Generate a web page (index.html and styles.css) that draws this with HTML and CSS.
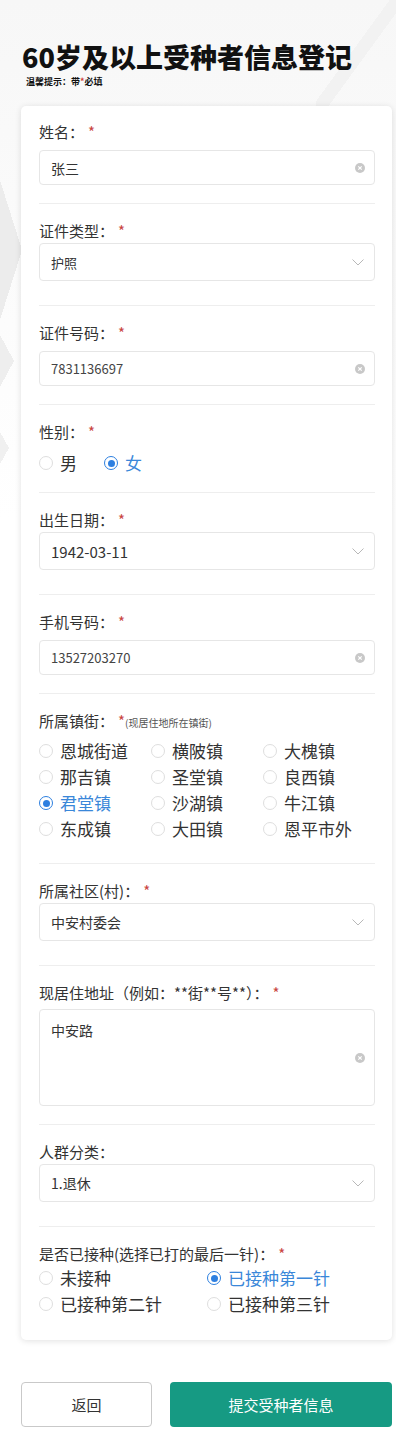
FILE: index.html
```html
<!DOCTYPE html>
<html lang="zh-CN">
<head>
<meta charset="utf-8">
<title>60岁及以上受种者信息登记</title>
<link rel="stylesheet" href="styles.css">
</head>
<body>
<div class="page">
  <h1 class="title">60岁及以上受种者信息登记</h1>
  <p class="tip">温馨提示：带<span class="tip-star">*</span>必填</p>

  <form class="card">
    <div class="field field-first">
      <div class="label">姓名：<span class="star">*</span></div>
      <div class="input input-text"><span class="value">张三</span>
        <svg class="clear" viewBox="0 0 10 10"><circle cx="5" cy="5" r="5"/><path d="M3.3 3.3L6.7 6.7M6.7 3.3L3.3 6.7"/></svg>
      </div>
    </div>

    <div class="field field-select">
      <div class="label">证件类型：<span class="star">*</span></div>
      <div class="input input-select"><span class="value value-sm">护照</span>
        <svg class="chev" viewBox="0 0 12 7"><path d="M0.5 0.5L6 6L11.5 0.5"/></svg>
      </div>
    </div>

    <div class="field">
      <div class="label">证件号码：<span class="star">*</span></div>
      <div class="input input-text"><span class="value value-num">7831136697</span>
        <svg class="clear" viewBox="0 0 10 10"><circle cx="5" cy="5" r="5"/><path d="M3.3 3.3L6.7 6.7M6.7 3.3L3.3 6.7"/></svg>
      </div>
    </div>

    <div class="field field-gender">
      <div class="label">性别：<span class="star">*</span></div>
      <div class="gender">
        <label class="radio"><span class="dot"></span><span class="rtext">男</span></label>
        <label class="radio checked"><span class="dot"></span><span class="rtext">女</span></label>
      </div>
    </div>

    <div class="field field-select">
      <div class="label">出生日期：<span class="star">*</span></div>
      <div class="input input-select"><span class="value value-date">1942-03-11</span>
        <svg class="chev" viewBox="0 0 12 7"><path d="M0.5 0.5L6 6L11.5 0.5"/></svg>
      </div>
    </div>

    <div class="field">
      <div class="label">手机号码：<span class="star">*</span></div>
      <div class="input input-text"><span class="value value-num">13527203270</span>
        <svg class="clear" viewBox="0 0 10 10"><circle cx="5" cy="5" r="5"/><path d="M3.3 3.3L6.7 6.7M6.7 3.3L3.3 6.7"/></svg>
      </div>
    </div>

    <div class="field field-town">
      <div class="label">所属镇街：<span class="star">*</span><span class="hint">(现居住地所在镇街)</span></div>
      <div class="grid3">
        <label class="radio"><span class="dot"></span><span class="rtext">恩城街道</span></label>
        <label class="radio"><span class="dot"></span><span class="rtext">横陂镇</span></label>
        <label class="radio"><span class="dot"></span><span class="rtext">大槐镇</span></label>
        <label class="radio"><span class="dot"></span><span class="rtext">那吉镇</span></label>
        <label class="radio"><span class="dot"></span><span class="rtext">圣堂镇</span></label>
        <label class="radio"><span class="dot"></span><span class="rtext">良西镇</span></label>
        <label class="radio checked"><span class="dot"></span><span class="rtext">君堂镇</span></label>
        <label class="radio"><span class="dot"></span><span class="rtext">沙湖镇</span></label>
        <label class="radio"><span class="dot"></span><span class="rtext">牛江镇</span></label>
        <label class="radio"><span class="dot"></span><span class="rtext">东成镇</span></label>
        <label class="radio"><span class="dot"></span><span class="rtext">大田镇</span></label>
        <label class="radio"><span class="dot"></span><span class="rtext">恩平市外</span></label>
      </div>
    </div>

    <div class="field field-select">
      <div class="label">所属社区(村)：<span class="star">*</span></div>
      <div class="input input-select"><span class="value">中安村委会</span>
        <svg class="chev" viewBox="0 0 12 7"><path d="M0.5 0.5L6 6L11.5 0.5"/></svg>
      </div>
    </div>

    <div class="field field-area">
      <div class="label">现居住地址（例如：**街**号**）：<span class="star">*</span></div>
      <div class="textarea"><span class="value">中安路</span>
        <svg class="clear" viewBox="0 0 10 10"><circle cx="5" cy="5" r="5"/><path d="M3.3 3.3L6.7 6.7M6.7 3.3L3.3 6.7"/></svg>
      </div>
    </div>

    <div class="field field-select">
      <div class="label">人群分类：</div>
      <div class="input input-select"><span class="value">1.退休</span>
        <svg class="chev" viewBox="0 0 12 7"><path d="M0.5 0.5L6 6L11.5 0.5"/></svg>
      </div>
    </div>

    <div class="field field-last">
      <div class="label">是否已接种(选择已打的最后一针)：<span class="star">*</span></div>
      <div class="grid2">
        <label class="radio"><span class="dot"></span><span class="rtext">未接种</span></label>
        <label class="radio checked"><span class="dot"></span><span class="rtext">已接种第一针</span></label>
        <label class="radio"><span class="dot"></span><span class="rtext">已接种第二针</span></label>
        <label class="radio"><span class="dot"></span><span class="rtext">已接种第三针</span></label>
      </div>
    </div>
  </form>

  <div class="actions">
    <button class="btn btn-back" type="button">返回</button>
    <button class="btn btn-submit" type="button">提交受种者信息</button>
  </div>
</div>
</body>
</html>
```

FILE: styles.css
```css
html { background: #fff; }

body {
  margin: 0;
  font-family: "Noto Sans CJK SC", "Noto Sans", sans-serif;
  color: #333;
  background-color: #fff;
  background-image:
    linear-gradient(to bottom left, transparent 50%, #ececec 50%),
    linear-gradient(to top left, transparent 50%, #ececec 50%),
    linear-gradient(to bottom left, transparent 50%, #eeeeee 50%),
    linear-gradient(to top left, transparent 50%, #eeeeee 50%),
    linear-gradient(to bottom left, transparent 50%, #f0f0f0 50%),
    linear-gradient(to top left, transparent 50%, #f0f0f0 50%),
    linear-gradient(to bottom right, transparent 46%, #f2f2f2 46%, #f2f2f2 56%, transparent 56%),
    linear-gradient(to bottom, #f7f7f7, #ffffff 520px);
  background-size:
    22px 70px, 22px 70px,
    14px 26px, 14px 26px,
    9px 16px, 9px 16px,
    80px 110px,
    100% 520px;
  background-position:
    0 180px, 0 250px,
    0 335px, 0 361px,
    0 432px, 0 448px,
    316px 0,
    0 0;
  background-repeat: no-repeat;
}

.page {
  padding: 41px 4px 12px 21px;
}

.title {
  margin: 0 0 0 1px;
  font-size: 27px;
  line-height: 32px;
  font-weight: 900;
  color: #111;
  letter-spacing: 0;
}

.tip {
  margin: 3px 0 19px 5px;
  font-size: 9px;
  line-height: 11px;
  font-weight: 700;
  color: #111;
  white-space: nowrap;
}

.tip-star { color: #d0403a; }

.card {
  display: block;
  margin: 0;
  background: #fff;
  border-radius: 5px;
  box-shadow: 0 1px 6px rgba(0, 0, 0, 0.12);
  padding: 0 17px 0 18px;
}

.field {
  padding: 17px 0 18px;
  border-bottom: 1px solid #eeeeee;
}

.field-first { padding-top: 16px; }

.label {
  font-size: 15px;
  line-height: 20px;
  color: #333;
  white-space: nowrap;
}

.star {
  color: #c9453f;
  margin-left: 4px;
}

.hint {
  font-size: 10px;
  color: #555;
}

.input {
  display: flex;
  align-items: center;
  justify-content: space-between;
  border: 1px solid #e6e6e6;
  border-radius: 4px;
  box-sizing: border-box;
  padding: 0 9px 0 11px;
}

.input-text {
  margin-top: 8px;
  height: 35px;
}

.field-select { padding-bottom: 24px; }

.input-select {
  margin-top: 2px;
  height: 38px;
  padding-right: 10px;
}

.value {
  font-size: 14px;
  color: #333;
}

.value-sm { font-size: 13px; }
.value-num { font-size: 13px; color: #444; }
.value-date { font-size: 15px; }

.clear {
  width: 10px;
  height: 10px;
  flex: none;
}

.clear circle { fill: #c8c8c8; }
.clear path { stroke: #fff; stroke-width: 1.2; fill: none; }

.chev {
  width: 12px;
  height: 7px;
  flex: none;
}

.chev path { stroke: #b8b8b8; stroke-width: 1; fill: none; }

.field-area .label { margin-bottom: 6px; }

.textarea {
  height: 97px;
  box-sizing: border-box;
  border: 1px solid #e6e6e6;
  border-radius: 4px;
  padding: 10px 9px 0 11px;
  display: flex;
  justify-content: space-between;
}

.textarea .value { line-height: 20px; }

.textarea .clear { align-self: center; margin-top: -10px; }

.field-gender { padding-bottom: 16px; }

.gender {
  margin-top: 8px;
  display: flex;
  gap: 27px;
}

.radio {
  display: flex;
  align-items: center;
  height: 26px;
  gap: 7px;
}

.dot {
  width: 14px;
  height: 14px;
  box-sizing: border-box;
  border: 1px solid #dedede;
  border-radius: 50%;
  background: #fff;
  flex: none;
  display: flex;
  align-items: center;
  justify-content: center;
}

.checked .dot {
  border: 1.5px solid #2d7fe0;
}

.checked .dot::after {
  content: "";
  width: 7px;
  height: 7px;
  border-radius: 50%;
  background: #2d7fe0;
}

.rtext {
  font-size: 17px;
  line-height: 20px;
  color: #333;
  white-space: nowrap;
}

.checked .rtext { color: #3a87d9; }

.field-town { padding-bottom: 21px; }

.grid3 {
  margin-top: 5px;
  display: grid;
  grid-template-columns: repeat(3, 1fr);
}

.field-last {
  border-bottom: none;
  padding-bottom: 23px;
}

.grid2 {
  margin-top: 1px;
  display: grid;
  grid-template-columns: repeat(2, 1fr);
}

.actions {
  margin-top: 42px;
  display: flex;
  gap: 18px;
}

.btn {
  height: 45px;
  border-radius: 4px;
  font-family: "Noto Sans CJK SC", sans-serif;
  font-size: 15px;
  cursor: pointer;
}

.btn-back {
  width: 131px;
  flex: none;
  background: #fff;
  border: 1px solid #c9c9c9;
  color: #333;
}

.btn-submit {
  flex: 1;
  background: #169a83;
  border: none;
  color: #fff;
}
```
